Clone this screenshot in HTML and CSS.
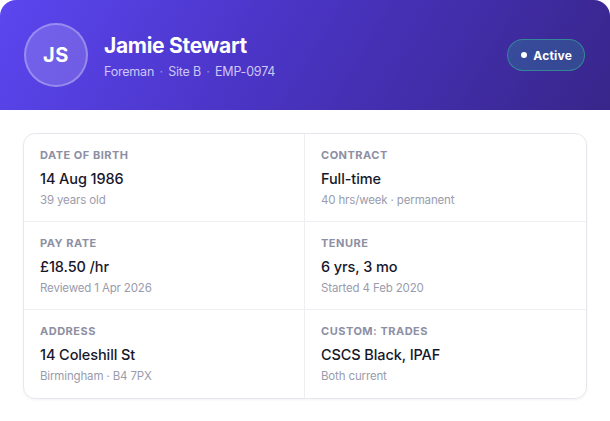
FILE: index.html
```html
<!DOCTYPE html>
<html lang="en">
<head>
  <meta charset="UTF-8" />
  <meta name="viewport" content="width=device-width, initial-scale=1.0"/>
  <title>Employee Profile - Jamie Stewart</title>
  <link rel="stylesheet" href="styles.css">
</head>
<body>
  <div class="profile">
    <div class="header">
      <div class="avatar">JS</div>
      <div class="who">
        <h1>Jamie Stewart</h1>
        <div class="meta">Foreman <span class="sep">·</span> Site B <span class="sep">·</span> EMP-0974</div>
      </div>
      <span class="badge"><span class="dot"></span>Active</span>
    </div>

    <div class="details">
      <div class="grid">
        <div class="cell">
          <div class="label">Date of birth</div>
          <div class="value">14 Aug 1986</div>
          <div class="sub">39 years old</div>
        </div>
        <div class="cell">
          <div class="label">Contract</div>
          <div class="value">Full-time</div>
          <div class="sub">40 hrs/week · permanent</div>
        </div>
        <div class="cell">
          <div class="label">Pay rate</div>
          <div class="value">£18.50 /hr</div>
          <div class="sub">Reviewed 1 Apr 2026</div>
        </div>
        <div class="cell">
          <div class="label">Tenure</div>
          <div class="value">6 yrs, 3 mo</div>
          <div class="sub">Started 4 Feb 2020</div>
        </div>
        <div class="cell">
          <div class="label">Address</div>
          <div class="value">14 Coleshill St</div>
          <div class="sub">Birmingham · B4 7PX</div>
        </div>
        <div class="cell">
          <div class="label">Custom: Trades</div>
          <div class="value">CSCS Black, IPAF</div>
          <div class="sub">Both current</div>
        </div>
      </div>
    </div>
  </div>
</body>
</html>
```

FILE: styles.css
```css
body {
  font-family: Inter, "Open Sans", sans-serif;
  background-color: #fff;
  margin: 0;
  padding: 0;
}

.profile {
  width: 610px;
  background-color: #fff;
  border-radius: 16px 16px 0 0;
  overflow: hidden;
}

.header {
  display: flex;
  align-items: center;
  gap: 16px;
  height: 110px;
  padding: 0 25px 0 24px;
  box-sizing: border-box;
  background: linear-gradient(120deg, #5b46f0 0%, #4a34c4 45%, #38268a 100%);
  color: #fff;
}

.avatar {
  width: 64px;
  height: 64px;
  border-radius: 50%;
  box-sizing: border-box;
  border: 2px solid rgba(255,255,255,0.28);
  background-color: rgba(255,255,255,0.16);
  display: flex;
  align-items: center;
  justify-content: center;
  font-size: 20px;
  font-weight: 700;
  letter-spacing: 0.5px;
}

.who {
  flex: 1;
}

.who h1 {
  margin: 0;
  font-size: 21px;
  font-weight: 700;
  letter-spacing: -0.3px;
  line-height: 28px;
}

.meta {
  margin-top: 4px;
  font-size: 12.5px;
  letter-spacing: -0.2px;
  color: rgba(235,232,255,0.82);
}

.sep {
  margin: 0 2px;
  opacity: 0.6;
}

.badge {
  display: inline-flex;
  align-items: center;
  gap: 6px;
  height: 32px;
  padding: 0 12px 0 13px;
  box-sizing: border-box;
  border-radius: 16px;
  border: 1px solid rgba(52,211,153,0.45);
  background-color: rgba(40,150,150,0.3);
  font-size: 12px;
  font-weight: 700;
  letter-spacing: 0.2px;
}

.dot {
  width: 6px;
  height: 6px;
  border-radius: 50%;
  background-color: #fff;
}

.details {
  padding: 23px;
}

.grid {
  display: grid;
  grid-template-columns: 1fr 1fr;
  border: 1px solid #e7e7ee;
  border-radius: 12px;
  box-shadow: 0 1px 3px rgba(20,20,50,0.05);
  overflow: hidden;
}

.cell {
  padding: 14px 16px;
  height: 88px;
  box-sizing: border-box;
  border-bottom: 1px solid #eeeef3;
}

.cell:nth-child(odd) {
  border-right: 1px solid #eeeef3;
}

.cell:nth-last-child(-n+2) {
  border-bottom: none;
}

.label {
  font-size: 11px;
  line-height: 14px;
  font-weight: 700;
  text-transform: uppercase;
  letter-spacing: 0.5px;
  color: #8d8fa3;
}

.value {
  margin-top: 7px;
  font-size: 14.5px;
  line-height: 20px;
  font-weight: 500;
  letter-spacing: -0.1px;
  color: #17172b;
}

.sub {
  margin-top: 3px;
  font-size: 11.5px;
  line-height: 16px;
  letter-spacing: -0.15px;
  color: #9a9cad;
}
```
